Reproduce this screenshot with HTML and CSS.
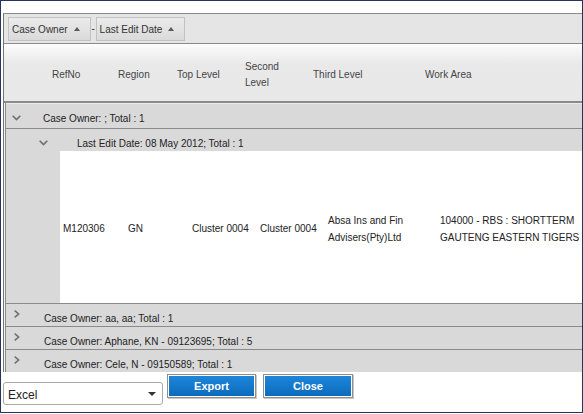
FILE: index.html
```html
<!DOCTYPE html>
<html>
<head>
<meta charset="utf-8">
<link rel="stylesheet" href="styles.css">
</head>
<body>
<div class="window">
  <div class="grid">
    <div class="group-panel">
      <div class="chip">Case Owner<span class="tri"></span></div>
      <span class="sep">-</span>
      <div class="chip">Last Edit Date<span class="tri"></span></div>
    </div>
    <div class="header">
      <div class="hcell"></div>
      <div class="hcell">RefNo</div>
      <div class="hcell">Region</div>
      <div class="hcell">Top Level</div>
      <div class="hcell narrow">Second Level</div>
      <div class="hcell">Third Level</div>
      <div class="hcell">Work Area</div>
    </div>
    <div class="body">
      <div class="rows">
        <div class="grow g1">
          <svg class="chev-down" width="9" height="6" viewBox="0 0 9 6"><path d="M0.7 0.7 L4.5 4.6 L8.3 0.7" fill="none" stroke="#6f6f6f" stroke-width="1.6"/></svg>
          <span class="gtext t1">Case Owner: ; Total : 1</span>
        </div>
        <div class="grow g2">
          <svg class="chev-down" width="9" height="6" viewBox="0 0 9 6"><path d="M0.7 0.7 L4.5 4.6 L8.3 0.7" fill="none" stroke="#6f6f6f" stroke-width="1.6"/></svg>
          <span class="gtext t2">Last Edit Date: 08 May 2012; Total : 1</span>
        </div>
        <div class="drow">
          <div class="indent"></div>
          <div class="cells">
            <div class="cell">M120306</div>
            <div class="cell">GN</div>
            <div class="cell">Cluster 0004</div>
            <div class="cell">Cluster 0004</div>
            <div class="cell">Absa Ins and Fin Advisers(Pty)Ltd</div>
            <div class="cell">104000 - RBS : SHORTTERM GAUTENG EASTERN TIGERS</div>
          </div>
        </div>
        <div class="grow gc">
          <svg class="chev-right" width="6" height="8" viewBox="0 0 6 8"><path d="M0.7 0.7 L4.6 4 L0.7 7.3" fill="none" stroke="#6f6f6f" stroke-width="1.6"/></svg>
          <span class="gtext tc">Case Owner: aa, aa; Total : 1</span>
        </div>
        <div class="grow gc">
          <svg class="chev-right" width="6" height="8" viewBox="0 0 6 8"><path d="M0.7 0.7 L4.6 4 L0.7 7.3" fill="none" stroke="#6f6f6f" stroke-width="1.6"/></svg>
          <span class="gtext tc">Case Owner: Aphane, KN - 09123695; Total : 5</span>
        </div>
        <div class="grow gc">
          <svg class="chev-right" width="6" height="8" viewBox="0 0 6 8"><path d="M0.7 0.7 L4.6 4 L0.7 7.3" fill="none" stroke="#6f6f6f" stroke-width="1.6"/></svg>
          <span class="gtext tc">Case Owner: Cele, N - 09150589; Total : 1</span>
        </div>
      </div>
    </div>
  </div>
  <div class="footer">
    <div class="select"><span>Excel</span><span class="arrow"></span></div>
    <button class="btn export">Export</button>
    <button class="btn close">Close</button>
  </div>
</div>
</body>
</html>
```
FILE: styles.css
```css
* { box-sizing: border-box; }
html, body { margin: 0; padding: 0; background: #fff; }
body {
  font-family: "Liberation Sans", Arial, sans-serif;
  font-size: 10px;
  color: #222;
}
.window {
  width: 583px;
  height: 413px;
  border: 1px solid #22375a;
  padding: 12px 0 0 2px;
  display: flex;
  flex-direction: column;
  background: #fff;
}
.grid {
  height: 359px;
  flex-shrink: 0;
  border-left: 1px solid #767676;
  border-top: 1px solid #8a8a8a;
  overflow: hidden;
  display: flex;
  flex-direction: column;
}
.group-panel {
  height: 30px;
  flex-shrink: 0;
  background: #e5e5e5;
  border-bottom: 1px solid #8a8a8a;
  display: flex;
  align-items: flex-start;
  padding: 3px 0 0 4px;
}
.chip {
  height: 24px;
  display: flex;
  align-items: center;
  padding: 0 10px 0 3px;
  border: 1px solid #c2c2c2;
  background: linear-gradient(#ebebeb, #dadada);
  color: #333;
}
.tri {
  width: 0;
  height: 0;
  border-left: 3.5px solid transparent;
  border-right: 3.5px solid transparent;
  border-bottom: 4px solid #5a5a5a;
  margin-left: 6px;
  margin-top: -1px;
}
.sep {
  margin: 6px 0 0 1px;
  color: #333;
  width: 4px;
}
.header {
  height: 59px;
  flex-shrink: 0;
  background: linear-gradient(#fdfdfd 0, #f6f6f6 6px, #e9e9e9 20px, #e8e8e8 100%);
  border-bottom: 2px solid #8a8a8a;
  display: grid;
  grid-template-columns: 48px 66px 59px 68px 68px 112px 1fr;
  align-items: center;
  padding-top: 4px;
  color: #444;
  line-height: 16px;
}
.hcell.narrow { max-width: 40px; }
.body {
  flex: 1;
  padding-left: 1px;
  background: #f2f2f2;
}
.rows {
  border-left: 1px solid #8a8a8a;
  height: 100%;
}
.grow {
  background: #d9d9d9;
  display: flex;
  align-items: flex-start;
  color: #222;
}
.gtext { line-height: 12px; margin-top: 9px; white-space: nowrap; }
.g1 {
  height: 26px;
  border-top: 1px solid #ececec;
  border-bottom: 1px solid #8a8a8a;
  padding-left: 6px;
}
.g2 {
  height: 22px;
  padding-left: 33px;
}
.chev-down { margin-top: 11px; flex-shrink: 0; }
.t1 { margin-left: 22px; }
.t2 { margin-left: 29px; }
.gc {
  height: 23px;
  border-top: 1px solid #8a8a8a;
  padding-left: 8px;
}
.chev-right { margin-top: 6px; flex-shrink: 0; }
.tc { margin-left: 24px; }
.drow {
  height: 152px;
  display: flex;
}
.indent {
  width: 54px;
  flex-shrink: 0;
  background: #d9d9d9;
}
.cells {
  flex: 1;
  background: #fff;
  display: grid;
  grid-template-columns: 65px 64px 68px 68px 112px 1fr;
  padding-left: 3px;
  padding-top: 3px;
  align-items: center;
  line-height: 17px;
  color: #222;
}
.footer {
  display: flex;
  align-items: flex-start;
  height: 40px;
}
.select {
  width: 160px;
  height: 23px;
  margin-top: 10px;
  border: 1px solid #a8a8a8;
  border-radius: 3px;
  background: #fff;
  display: flex;
  align-items: center;
  justify-content: space-between;
  padding: 2px 6px 0 4px;
  font-size: 12px;
  color: #222;
}
.arrow {
  width: 0;
  height: 0;
  border-left: 4px solid transparent;
  border-right: 4px solid transparent;
  border-top: 4px solid #333;
  margin-top: -2px;
}
.btn {
  height: 24px;
  margin-top: 2px;
  border: 1px solid #8e8e8e;
  box-shadow: inset 0 0 0 1px #ffffff, 1px 1px 0 #c8c8c8;
  background: linear-gradient(#1f87da, #0a6abd);
  color: #fff;
  font-family: "Liberation Sans", Arial, sans-serif;
  font-weight: bold;
  font-size: 11px;
  padding: 0 0 1px 0;
}
.export { width: 89px; margin-left: 4px; }
.close { width: 90px; margin-left: 7px; }
```
